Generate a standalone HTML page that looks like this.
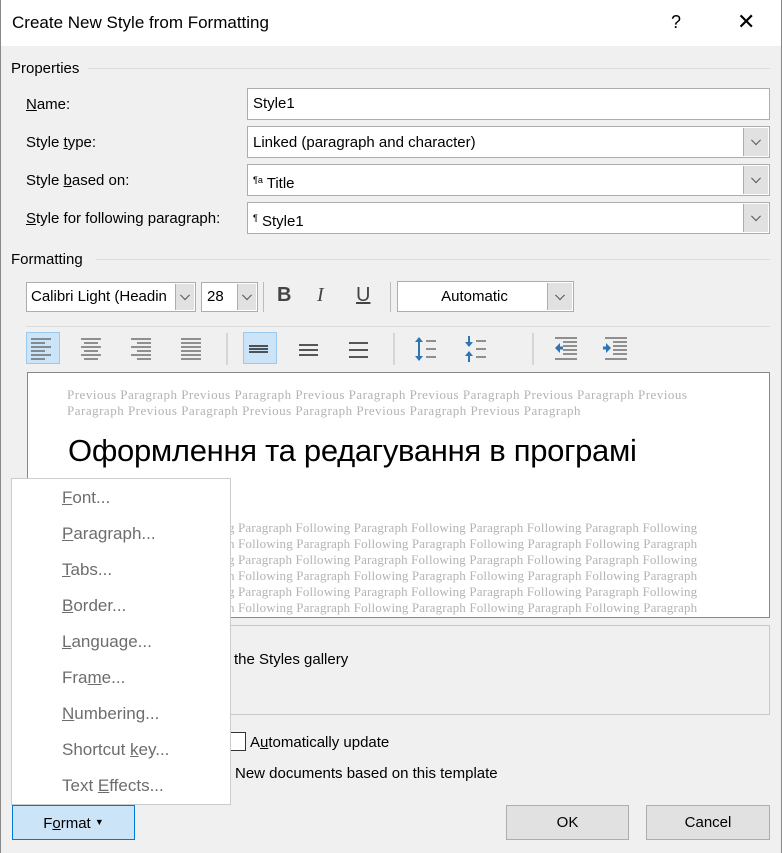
<!DOCTYPE html>
<html><head><style>
body{margin:0;width:782px;height:853px;background:#f0f0f0;font-family:"Liberation Sans",sans-serif;font-size:15px;color:#000;position:relative;overflow:hidden}
.a{position:absolute}
.inp{position:absolute;background:#fff;border:1px solid #adadad;box-sizing:border-box;padding-left:5px;line-height:29px}
.dd{position:absolute;right:1px;top:1px;bottom:1px;width:24px;background:#e1e1e1;border-left:1px solid #adadad}
.dd:after{content:"";position:absolute;left:50%;top:50%;width:6px;height:6px;border-right:1px solid #555;border-bottom:1px solid #555;transform:translate(-50%,-75%) rotate(45deg)}
.lbl{position:absolute;left:26px}
.mi{position:absolute;left:62px;color:#6d6d6d;font-size:17px}
.pv{position:absolute;font-family:"Liberation Serif",serif;font-size:13px;color:#b3b3b3;white-space:nowrap;letter-spacing:0.15px}
.btn{position:absolute;border:1px solid #adadad;background:#e1e1e1;box-sizing:border-box;text-align:center;line-height:33px}
.ln{stroke:#555;stroke-width:1.2}
</style></head><body>
<div class="a" style="left:0;top:0;width:782px;height:46px;background:#fff"></div>
<div class="a" style="left:0;top:0;width:1px;height:853px;background:#888"></div>
<div class="a" style="left:781px;top:0;width:1px;height:853px;background:#888"></div>
<div class="a" style="left:12px;top:13px;font-size:17px">Create New Style from Formatting</div>
<div class="a" style="left:671px;top:12px;font-size:18px">?</div>
<div class="a" style="left:737px;top:9px;font-size:22px">✕</div>

<div class="a" style="left:11px;top:60px">Properties</div>
<div class="a" style="left:88px;top:68px;width:682px;height:1px;background:#dcdcdc"></div>
<div class="lbl" style="top:96px"><u>N</u>ame:</div>
<div class="lbl" style="top:134px">Style <u>t</u>ype:</div>
<div class="lbl" style="top:172px">Style <u>b</u>ased on:</div>
<div class="lbl" style="top:210px"><u>S</u>tyle for following paragraph:</div>
<div class="inp" style="left:247px;top:88px;width:523px;height:32px;line-height:30px">Style1</div>
<div class="inp" style="left:247px;top:126px;width:523px;height:32px;line-height:31px">Linked (paragraph and character)<div class="dd"></div></div>
<div class="inp" style="left:247px;top:164px;width:523px;height:32px;line-height:31px"><span style="font-size:9px;vertical-align:5px">¶a</span> Title<div class="dd"></div></div>
<div class="inp" style="left:247px;top:202px;width:523px;height:32px;line-height:31px"><span style="font-size:9px;vertical-align:5px">¶</span> Style1<div class="dd"></div></div>

<div class="a" style="left:11px;top:251px">Formatting</div>
<div class="a" style="left:96px;top:259px;width:674px;height:1px;background:#dcdcdc"></div>
<div class="inp" style="left:26px;top:282px;width:170px;height:30px;line-height:28px;padding-left:4px">Calibri Light (Headin<div class="dd" style="width:18px"></div></div>
<div class="inp" style="left:201px;top:282px;width:57px;height:30px;line-height:28px">28<div class="dd" style="width:18px"></div></div>
<div class="a" style="left:263px;top:282px;width:1px;height:30px;background:#bbb"></div>
<div class="a" style="left:277px;top:284px;font-weight:bold;font-size:20px;color:#444">B</div>
<div class="a" style="left:317px;top:284px;font-style:italic;font-size:20px;color:#444;font-family:'Liberation Serif',serif">I</div>
<div class="a" style="left:356px;top:284px;text-decoration:underline;font-size:20px;color:#444">U</div>
<div class="a" style="left:390px;top:282px;width:1px;height:30px;background:#bbb"></div>
<div class="inp" style="left:397px;top:281px;width:177px;height:31px;text-align:center;padding:0 22px 0 0">Automatic<div class="dd"></div></div>
<div class="a" style="left:26px;top:326px;width:744px;height:1px;background:#dcdcdc"></div>

<div class="a" style="left:26px;top:332px;width:34px;height:32px;background:#cce4f7;border:1px solid #99c9ef;box-sizing:border-box"></div>
<div class="a" style="left:243px;top:332px;width:34px;height:32px;background:#cce4f7;border:1px solid #99c9ef;box-sizing:border-box"></div>
<svg class="a" style="left:0;top:330px" width="782" height="40">
<g class="ln">
<path d="M31 9h20M31 13h14M31 17h20M31 21h14M31 25h20M31 29h14"/>
<path d="M81 9h20M84 13h14M81 17h20M84 21h14M81 25h20M84 29h14"/>
<path d="M131 9h20M137 13h14M131 17h20M137 21h14M131 25h20M137 29h14"/>
<path d="M181 9h20M181 13h20M181 17h20M181 21h20M181 25h20M181 29h20"/>
</g>
<line x1="227" y1="3" x2="227" y2="35" stroke="#bbb"/>
<path d="M249 16h19M249 19h19M249 22h19" stroke="#222" stroke-width="1.5"/>
<path d="M299 15h19M299 20h19M299 25h19" stroke="#222" stroke-width="1.5"/>
<path d="M349 13h19M349 20h19M349 27h19" stroke="#222" stroke-width="1.5"/>
<line x1="394" y1="3" x2="394" y2="35" stroke="#bbb"/>
<g stroke="#2e75b6" stroke-width="2" fill="#2e75b6"><path d="M419 8v22"/><path d="M415 12l4-5 4 5zM415 26l4 5 4-5z" stroke="none"/>
<path d="M469 6v10M469 22v10"/><path d="M465 12l4 5 4-5zM465 26l4-5 4 5z" stroke="none"/></g>
<path d="M426 11h10M426 19h10M426 27h10M476 11h10M476 19h10M476 27h10" class="ln"/>
<line x1="533" y1="3" x2="533" y2="35" stroke="#bbb"/>
<path d="M555 8h22M563 12h14M563 16h14M563 20h14M563 24h14M555 29h22M605 8h22M613 12h14M613 16h14M613 20h14M613 24h14M605 29h22" class="ln"/>
<path d="M555 18l5-5v10zM611 18l-5-5v10z" fill="#2e75b6"/><path d="M558 18h5M603 18h5" stroke="#2e75b6" stroke-width="3"/>
</svg>

<div class="a" style="left:27px;top:372px;width:743px;height:246px;background:#fff;border:1px solid #888;box-sizing:border-box;overflow:hidden">
<div class="pv" style="left:39px;top:14px;letter-spacing:0.5px">Previous Paragraph Previous Paragraph Previous Paragraph Previous Paragraph Previous Paragraph Previous</div>
<div class="pv" style="left:39px;top:30px;letter-spacing:0.5px">Paragraph Previous Paragraph Previous Paragraph Previous Paragraph Previous Paragraph</div>
<div class="a" style="left:40px;top:60px;font-size:31px;font-family:'Liberation Sans',sans-serif;letter-spacing:-0.3px">Оформлення та редагування в програмі</div>
<div class="pv" style="left:200px;top:147px">g Paragraph Following Paragraph Following Paragraph Following Paragraph Following</div>
<div class="pv" style="left:200px;top:163px">h Following Paragraph Following Paragraph Following Paragraph Following Paragraph</div>
<div class="pv" style="left:200px;top:179px">g Paragraph Following Paragraph Following Paragraph Following Paragraph Following</div>
<div class="pv" style="left:200px;top:195px">h Following Paragraph Following Paragraph Following Paragraph Following Paragraph</div>
<div class="pv" style="left:200px;top:211px">g Paragraph Following Paragraph Following Paragraph Following Paragraph Following</div>
<div class="pv" style="left:200px;top:227px">h Following Paragraph Following Paragraph Following Paragraph Following Paragraph</div>
</div>

<div class="a" style="left:27px;top:625px;width:743px;height:90px;border:1px solid #c8c8c8;box-sizing:border-box"></div>
<div class="a" style="left:234px;top:651px">the Styles gallery</div>
<div class="a" style="left:229px;top:732px;width:15px;height:17px;border:1px solid #333;background:#fff"></div>
<div class="a" style="left:250px;top:734px">A<u>u</u>tomatically update</div>
<div class="a" style="left:235px;top:765px">New documents based on this template</div>

<div class="a" style="left:11px;top:478px;width:220px;height:327px;background:#fff;border:1px solid #ccc;box-sizing:border-box"></div>
<div class="mi" style="top:488px"><u>F</u>ont...</div>
<div class="mi" style="top:524px"><u>P</u>aragraph...</div>
<div class="mi" style="top:560px"><u>T</u>abs...</div>
<div class="mi" style="top:596px"><u>B</u>order...</div>
<div class="mi" style="top:632px"><u>L</u>anguage...</div>
<div class="mi" style="top:668px">Fra<u>m</u>e...</div>
<div class="mi" style="top:704px"><u>N</u>umbering...</div>
<div class="mi" style="top:740px">Shortcut <u>k</u>ey...</div>
<div class="mi" style="top:776px">Text <u>E</u>ffects...</div>

<div class="btn" style="left:12px;top:805px;width:123px;height:35px;background:#cce4f7;border-color:#0078d7">F<u>o</u>rmat <span style="font-size:9px;vertical-align:3px">▼</span></div>
<div class="btn" style="left:506px;top:805px;width:123px;height:35px">OK</div>
<div class="btn" style="left:646px;top:805px;width:124px;height:35px">Cancel</div>
</body></html>
